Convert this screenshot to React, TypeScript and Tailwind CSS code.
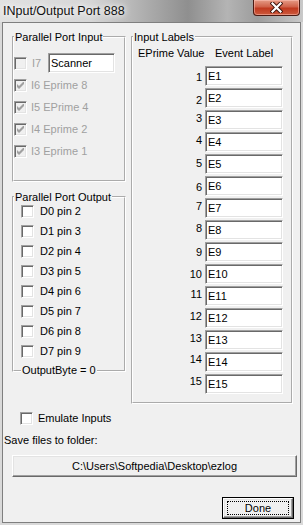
const inputs = [
  { id: "I6", label: "I6 Eprime 8" },
  { id: "I5", label: "I5 EPrime 4" },
  { id: "I4", label: "I4 Eprime 2" },
  { id: "I3", label: "I3 Eprime 1" },
];

const outputs = [2, 3, 4, 5, 6, 7, 8, 9].map((pin, i) => `D${i} pin ${pin}`);

// the number labels in the original dialog sit a little off the row centre
const labelRows = [
  "pt-[2px]", "pt-[4px]", "pb-[3px]", "pb-[3px]", "pb-[1px]",
  "pt-[3px]", "pb-[4px]", "pb-[3px]", "", "pt-[1px]",
  "pb-[4px]", "pb-[4px]", "pb-[3px]", "pb-[6px]", "pb-[6px]",
];

const sunken =
  "border border-t-[#a0a0a0] border-l-[#a0a0a0] border-b-white border-r-white shadow-[inset_1px_1px_0_#696969,inset_-1px_-1px_0_#e3e3e3]";
const raised =
  "border border-t-white border-l-white border-b-[#696969] border-r-[#696969] shadow-[inset_-1px_-1px_0_#a0a0a0,inset_1px_1px_0_#e3e3e3]";
const group = "border-2 border-white [border-style:groove]";

function Check({ checked = false, disabled = false }: { checked?: boolean; disabled?: boolean }) {
  return (
    <span
      className={`flex h-[13px] w-[13px] shrink-0 items-center justify-center ${sunken} ${
        disabled ? "bg-[#f0f0f0]" : "bg-white"
      }`}
    >
      {checked && (
        <svg width="7" height="7" viewBox="0 0 7 7">
          <path d="M0 2 L2 4 L7 -1 L7 2 L2 7 L0 5 Z" fill={disabled ? "#a0a0a0" : "#000"} />
        </svg>
      )}
    </span>
  );
}

function TextBox({ value, className = "" }: { value: string; className?: string }) {
  return (
    <div className={`flex h-[20px] items-center bg-white px-[2px] text-black ${sunken} ${className}`}>
      {value}
    </div>
  );
}

export default function App() {
  return (
    <div className="flex h-[525px] w-[303px] flex-col overflow-hidden bg-[#d9d9d9] font-['Liberation_Sans',Arial,sans-serif] text-[11px] leading-[13px] text-black">
      {/* title bar */}
      <div className="flex h-[22px] shrink-0 items-start justify-between bg-[linear-gradient(to_right,#e2e2e2_0%,#d6d6d6_30%,#a9a9a9_50%,#8f8f8f_62%,#b4b4b4_75%,#9c9c9c_85%,#c9c9c9_100%)]">
        <span className="mt-[4px] ml-[3px] text-[12.5px] leading-[14px] text-[#111] [text-shadow:0_0_5px_#fff,0_0_8px_#fff]">
          INput/Output Port 888
        </span>
        <div className="mr-[3px] flex h-[16px] w-[47px] items-center justify-center rounded-b-[4px] border border-t-0 border-[#4b1a12] bg-[linear-gradient(to_bottom,#e59b86_0%,#d0624a_45%,#c0391f_55%,#cc5a3c_100%)] shadow-[inset_0_0_0_1px_rgba(255,200,190,0.5)]">
          <svg width="13" height="11" viewBox="0 0 13 11">
            <path d="M2.5 1.5 L10.5 9.5 M10.5 1.5 L2.5 9.5" stroke="#3a1008" strokeWidth="4" strokeLinecap="square" />
            <path d="M2.5 1.5 L10.5 9.5 M10.5 1.5 L2.5 9.5" stroke="#fff" strokeWidth="2.2" strokeLinecap="square" />
          </svg>
        </div>
      </div>

      {/* client area */}
      <div className="ml-[2px] mr-[2px] flex h-[501px] shrink-0 flex-col border border-[#7f7f7f] bg-[#f0f0f0]">
        <div className="flex pt-[7px] pl-[9px]">
          <div className="flex w-[114px] flex-col">
            <fieldset className={`h-[152px] ${group}`}>
              <legend className="px-[1px] leading-[14px]">Parallel Port Input</legend>
              <div className="mt-[9px] flex h-[20px] items-center">
                <Check disabled />
                <span className="ml-[5px] w-[16px] text-[#a0a0a0]">I7</span>
                <TextBox value="Scanner" className="w-[67px]" />
              </div>
              <div className="mt-[1px] flex flex-col">
                {inputs.map((row) => (
                  <div key={row.id} className="flex h-[22px] items-center">
                    <Check checked disabled />
                    <span className="ml-[4px] text-[#a0a0a0]">{row.label}</span>
                  </div>
                ))}
              </div>
            </fieldset>

            <fieldset className={`mt-[8px] h-[182px] ${group}`}>
              <legend className="px-[1px] leading-[14px]">Parallel Port Output</legend>
              <div className="mt-[1px] flex flex-col gap-[7px] pl-[7px]">
                {outputs.map((label) => (
                  <div key={label} className="flex h-[13px] items-center">
                    <Check />
                    <span className="ml-[6px]">{label}</span>
                  </div>
                ))}
              </div>
            </fieldset>
            <span className="relative -mt-[8px] ml-[9px] w-fit bg-[#f0f0f0] px-[1px]">OutputByte = 0</span>
          </div>

          <fieldset className={`ml-[5px] h-[374px] w-[162px] ${group}`}>
            <legend className="px-[1px] leading-[14px]">Input Labels</legend>
            <div className="mt-[3px] flex pl-[5px]">
              <span className="w-[77px]">EPrime Value</span>
              <span>Event Label</span>
            </div>
            <div className="mt-[6px] flex flex-col gap-[2px]">
              {labelRows.map((pad, i) => (
                <div key={i} className="flex h-[20px]">
                  <span className={`flex h-[20px] w-[69px] items-center justify-end ${pad}`}>{i + 1}</span>
                  <TextBox value={`E${i + 1}`} className="ml-[3px] w-[78px]" />
                </div>
              ))}
            </div>
          </fieldset>
        </div>

        <div className="mt-[8px] ml-[17px] flex h-[13px] items-center">
          <Check />
          <span className="ml-[5px]">Emulate Inputs</span>
        </div>

        <span className="mt-[9px] ml-[1px]">Save files to folder:</span>

        <div className={`mt-[8px] ml-[9px] flex h-[22px] w-[285px] items-center justify-center bg-[#f0f0f0] ${raised}`}>
          C:\Users\Softpedia\Desktop\ezlog
        </div>

        <div className="mt-[20px] mr-[6px] ml-auto h-[22px] w-[72px] border border-black">
          <div className={`flex h-full items-center justify-center bg-[#f0f0f0] ${raised}`}>
            <div className="flex h-[14px] w-[62px] items-center justify-center border border-dotted border-black">
              Done
            </div>
          </div>
        </div>
      </div>
    </div>
  );
}
